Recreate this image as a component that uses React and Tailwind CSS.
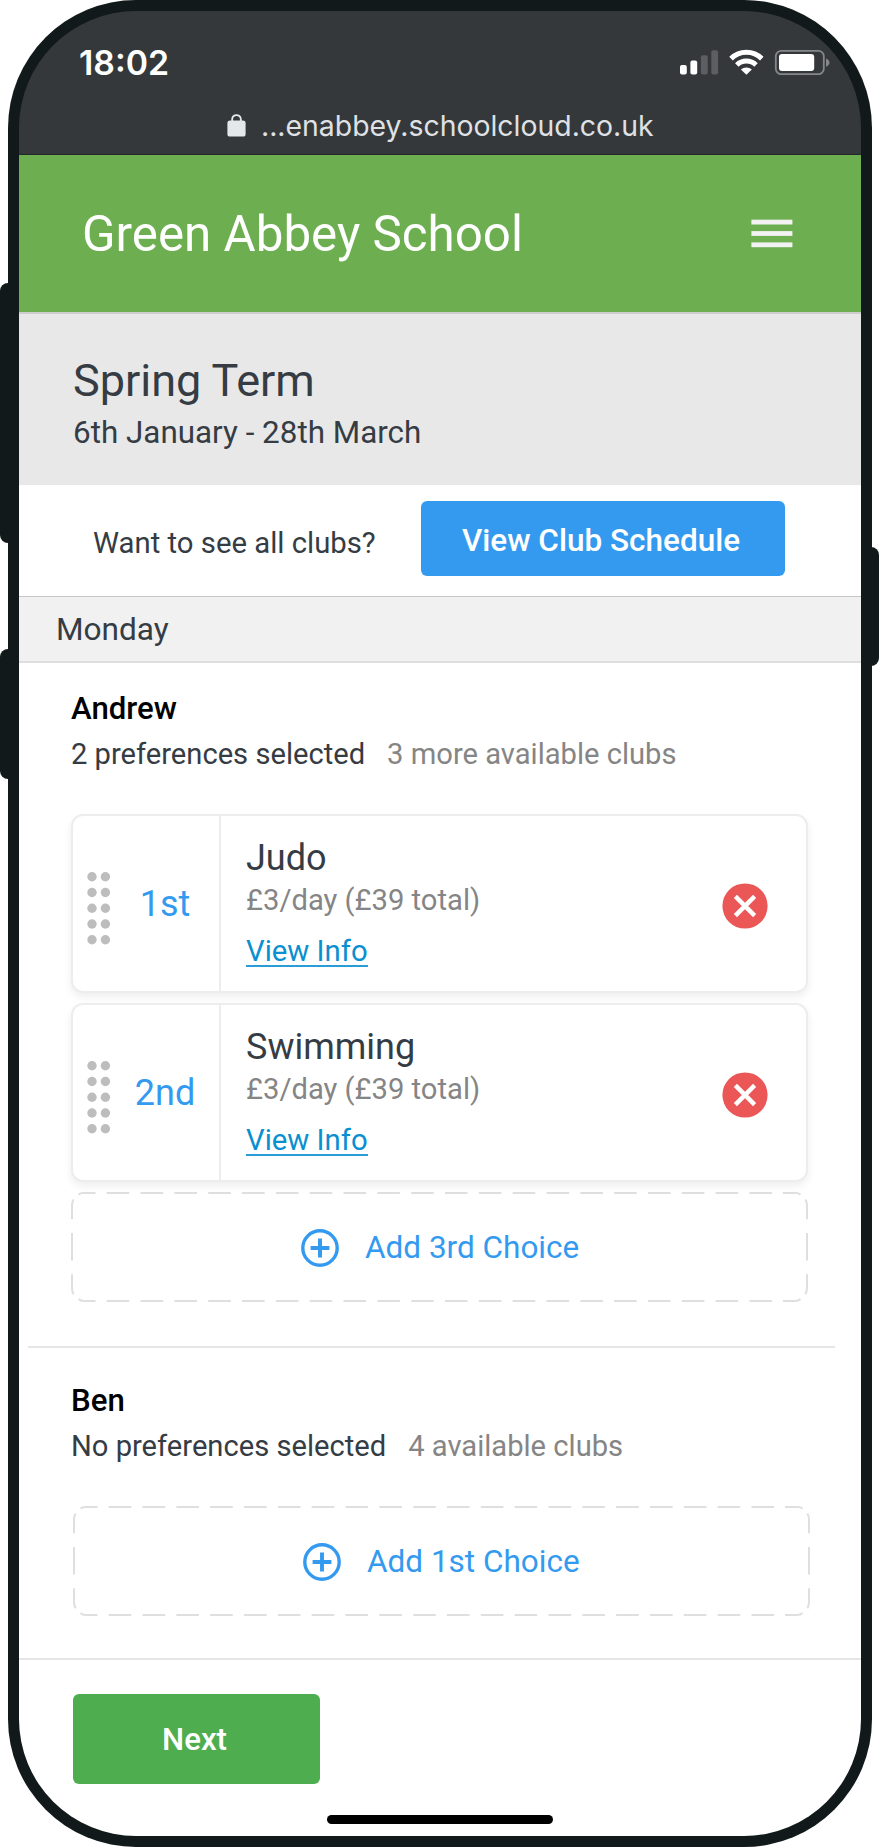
import React from "react";

function StatusIcons() {
  return (
    <svg width="152" height="28" viewBox="679 48 152 28" className="block">
      <rect x="680" y="65" width="6.8" height="9.6" rx="2" fill="#fff" />
      <rect x="690.4" y="60.6" width="6.8" height="14" rx="2" fill="#fff" />
      <rect x="700.9" y="55.3" width="6.8" height="19.3" rx="2" fill="#5c5e61" />
      <rect x="711.3" y="50.3" width="6.8" height="24.3" rx="2" fill="#5c5e61" />
      <g fill="none" stroke="#fff" strokeWidth="5">
        <path d="M731 58.6 A22 22 0 0 1 761.8 58.6" />
        <path d="M736.8 65 A13.8 13.8 0 0 1 756 65" />
      </g>
      <path d="M740.9 69.4 A8.6 8.6 0 0 1 751.9 69.4 L746.4 74.8 Z" fill="#fff" />
      <rect x="775.8" y="50.8" width="48" height="23.4" rx="5.5" fill="none" stroke="#85878a" strokeWidth="1.8" />
      <rect x="779" y="54" width="35.2" height="17" rx="3" fill="#fff" />
      <path d="M826 58.6 C830.6 60 830.6 65.2 826 66.8 Z" fill="#85878a" />
    </svg>
  );
}

function LockIcon() {
  return (
    <svg width="20" height="24" viewBox="0 0 20 24" className="block">
      <path d="M5.2 9 V5.6 A4.4 4.4 0 0 1 13.8 5.6 V9" fill="none" stroke="#e4e8eb" strokeWidth="1.8" />
      <rect x="0.4" y="7.6" width="18.2" height="16" rx="2.6" fill="#e4e8eb" />
    </svg>
  );
}

function MenuIcon() {
  return (
    <svg width="42" height="30" viewBox="0 0 42 30" fill="#f2f2f2" className="block">
      <rect x="0.4" y="0.7" width="41" height="4.8" />
      <rect x="0.4" y="12.1" width="41" height="4.8" />
      <rect x="0.4" y="23.4" width="41" height="4.8" />
    </svg>
  );
}

function DragHandle() {
  return (
    <svg width="24" height="73" viewBox="0 0 24 73" fill="#bdbdbd" className="block">
      {[4.8, 20.5, 36.2, 52, 67.7].map((y) => (
        <g key={y}>
          <circle cx="5" cy={y} r="4.7" />
          <circle cx="18.4" cy={y} r="4.7" />
        </g>
      ))}
    </svg>
  );
}

function RemoveIcon() {
  return (
    <svg width="46" height="46" viewBox="0 0 46 46" className="block">
      <circle cx="23" cy="23" r="22.6" fill="#eb5757" />
      <path d="M13.4 13.4 L32.6 32.6 M32.6 13.4 L13.4 32.6" stroke="#fff" strokeWidth="4.4" />
    </svg>
  );
}

function PlusCircle() {
  return (
    <svg width="38" height="38" viewBox="0 0 38 38" fill="none" stroke="#349af0" className="block">
      <circle cx="19" cy="19" r="17.2" strokeWidth="3.4" />
      <path d="M19 9.6 V28.4 M9.6 19 H28.4" strokeWidth="3.9" />
    </svg>
  );
}

const dashStarts = Array.from({ length: 20 }, (_, i) => 35.7 + i * 33.83);

function DashedOutline() {
  return (
    <svg width="737" height="110" viewBox="0 0 737 110" fill="none" stroke="#dfdfdf" strokeWidth="2" className="absolute inset-0">
      {dashStarts.map((x) => (
        <path key={x} d={`M${x} 1 h22.6 M${x} 109 h22.6`} />
      ))}
      <path d="M7.5 2.6 Q9.5 1 12 1 H24.5 M2.6 7.5 Q1 10.5 1 13 V27.3 M1 41 V68.6 M1 82.3 V96 Q1 99.5 2.6 102.3 M7.5 107 Q9.5 109 13 109 H24.5" />
      <path d="M729.5 2.6 Q727.5 1 725 1 H712 M734.4 7.5 Q736 10.5 736 13 V27.3 M736 41 V68.6 M736 82.3 V96 Q736 99.5 734.4 102.3 M729.5 107 Q727.5 109 724 109 H712" />
    </svg>
  );
}

function AddChoice({ label }) {
  return (
    <button className="relative flex h-[110px] w-[737px] items-center pl-[230px] pt-[1px]">
      <DashedOutline />
      <PlusCircle />
      <span className="ml-[26px] pt-[1px] text-[31.5px] leading-[36px] text-[#349af0]">{label}</span>
    </button>
  );
}

function ClubCard({ rank, name }) {
  return (
    <div className="flex h-[179px] w-[737px] rounded-[12px] border-2 border-[#ededed] bg-white shadow-[0_4px_8px_rgba(0,0,0,0.07)]">
      <div className="flex w-[148px] items-center border-r-2 border-[#ededed] pl-[14px]">
        <div className="pt-[10px]">
          <DragHandle />
        </div>
        <span className="w-[110px] text-center text-[36px] leading-[40px] text-[#349af0]">{rank}</span>
      </div>
      <div className="flex-1 pl-[25px] pt-[22px]">
        <div className="text-[36px] leading-[40px] text-[#353c44]">{name}</div>
        <div className="mt-[6px] text-[29.2px] leading-[32px] text-[#858585]">£3/day (£39 total)</div>
        <a className="mt-[22px] inline-block border-b-2 border-[#2b9dd6] text-[29.3px] leading-[27px] text-[#0a8fd0]">View Info</a>
      </div>
      <div className="flex items-center pr-[38px] pt-[4px]">
        <RemoveIcon />
      </div>
    </div>
  );
}

function ChildHeading({ name, selected, available }) {
  return (
    <div className="pl-[52px]">
      <h3 className="text-[31.2px] font-medium leading-[36px] text-black">{name}</h3>
      <p className="mt-[9px] flex gap-[22px] text-[29.15px] leading-[36px]">
        <span className="text-[#353c44]">{selected}</span>
        <span className="text-[#858585]">{available}</span>
      </p>
    </div>
  );
}

export default function App() {
  return (
    <div className="relative h-[1847px] w-[879px] overflow-hidden bg-white pl-[8px] font-['Roboto',sans-serif]">
      <div className="absolute left-0 top-[283px] h-[260px] w-[16px] rounded-l-[8px] bg-[#11191b]" />
      <div className="absolute left-0 top-[649px] h-[130px] w-[16px] rounded-l-[8px] bg-[#11191b]" />
      <div className="absolute right-0 top-[547px] h-[119px] w-[16px] rounded-r-[8px] bg-[#11191b]" />

      <div className="relative h-[1847px] w-[864px] rounded-[128px] bg-[#11191b] p-[11px]">
        <div className="flex h-full flex-col overflow-hidden rounded-[117px]">
          <div className="h-[144px] shrink-0 border-b border-[#25282a] bg-[#35383b] pt-[31px] font-['Inter',sans-serif]">
            <div className="flex h-[40px] justify-between pl-[60px] pr-[30px]">
              <span className="pt-[1px] text-[33.8px] font-semibold leading-[40px] text-white">18:02</span>
              <div className="pt-[6px]">
                <StatusIcons />
              </div>
            </div>
            <div className="mt-[26px] flex pl-[208px]">
              <div className="pt-[5px]">
                <LockIcon />
              </div>
              <span className="ml-[14px] whitespace-nowrap text-[28.4px] leading-[36px] text-[#dfe1e4]">...enabbey.schoolcloud.co.uk</span>
            </div>
          </div>

          <header className="flex h-[157px] shrink-0 items-center justify-between bg-[#6dae50] pl-[63px] pr-[68px]">
            <h1 className="text-[49.3px] leading-[56px] text-white">Green Abbey School</h1>
            <MenuIcon />
          </header>

          <section className="h-[173px] shrink-0 border-t-2 border-[#cdcdcd] bg-[#e8e8e8] pl-[54px] pt-[40px] text-[#353c44]">
            <h2 className="text-[45px] leading-[54px]">Spring Term</h2>
            <p className="mt-[7px] text-[31.4px] leading-[36px]">6th January - 28th March</p>
          </section>

          <main className="flex flex-1 flex-col bg-white">
            <section className="flex h-[112px] shrink-0 items-start justify-between border-b border-[#c6c6c6] pl-[74px] pr-[76px] pt-[16px]">
              <p className="mt-[24px] text-[29.3px] leading-[36px] text-[#353c44]">Want to see all clubs?</p>
              <button className="h-[75px] w-[364px] rounded-[6px] bg-[#349af0] pr-[4px] pt-[4px] text-[31.5px] font-medium leading-[36px] text-white">View Club Schedule</button>
            </section>

            <div className="flex h-[66px] shrink-0 items-center border-b-2 border-[#dedede] bg-[#f1f1f1] pl-[37px] pt-[2px] text-[31.6px] leading-[36px] text-[#353c44]">Monday</div>

            <section className="shrink-0 pt-[28px]">
              <ChildHeading name="Andrew" selected="2 preferences selected" available="3 more available clubs" />
              <div className="mt-[42px] flex flex-col gap-[10px] pl-[52px]">
                <ClubCard rank="1st" name="Judo" />
                <ClubCard rank="2nd" name="Swimming" />
                <AddChoice label="Add 3rd Choice" />
              </div>
            </section>

            <div className="ml-[9px] mt-[44px] h-[2px] w-[807px] shrink-0 bg-[#e6e6e6]" />

            <section className="shrink-0 pt-[35px]">
              <ChildHeading name="Ben" selected="No preferences selected" available="4 available clubs" />
              <div className="mt-[42px] pl-[54px]">
                <AddChoice label="Add 1st Choice" />
              </div>
            </section>

            <footer className="mt-[42px] flex-1 border-t-2 border-[#e6e6e6] pl-[54px] pt-[34px]">
              <button className="block h-[90px] w-[247px] rounded-[6px] bg-[#4eae4f] pr-[4px] pt-[2px] text-[31.2px] font-medium leading-[36px] text-white">Next</button>
              <div className="ml-[254px] mt-[31px] h-[9px] w-[226px] rounded-full bg-black" />
            </footer>
          </main>
        </div>
      </div>
    </div>
  );
}
